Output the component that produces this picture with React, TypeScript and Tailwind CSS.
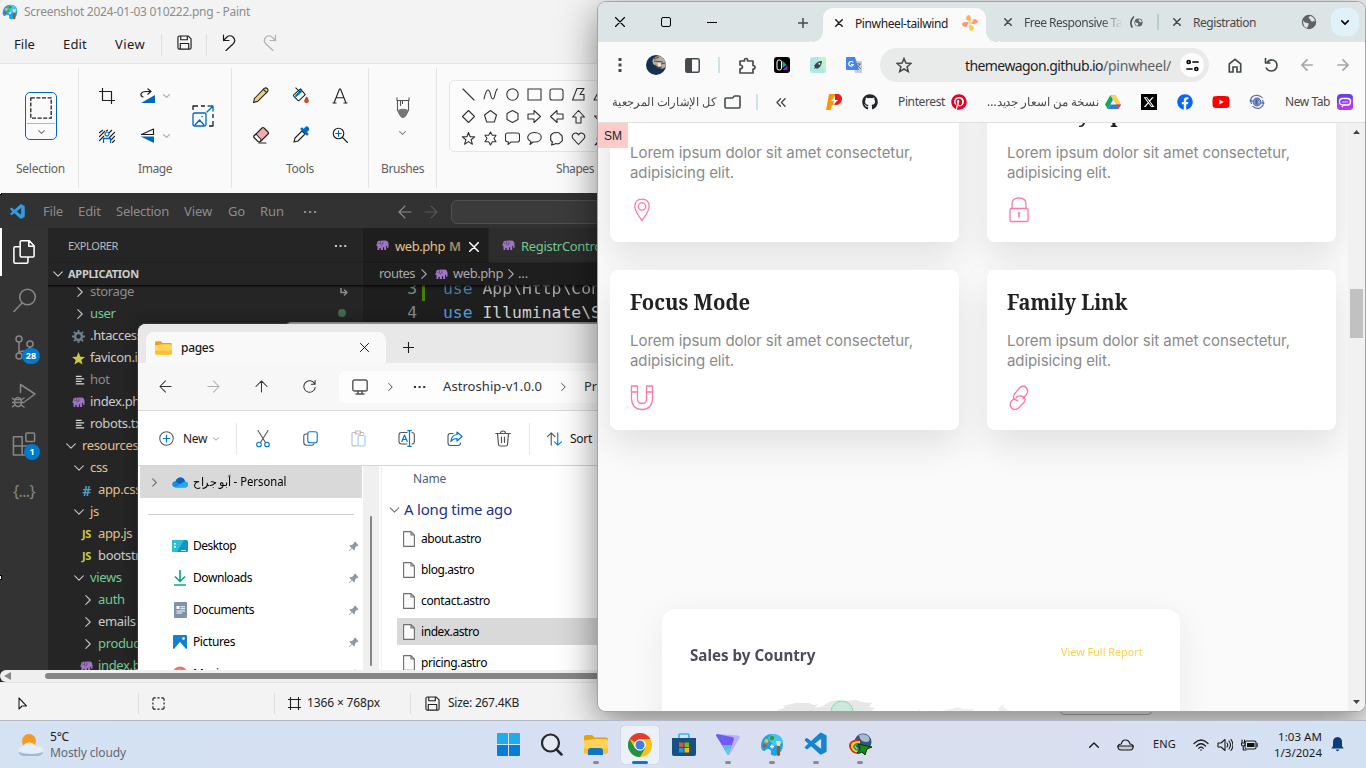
import React, { useLayoutEffect, useRef } from "react";
import { FaGithub, FaPinterest, FaFacebook, FaYoutube } from "react-icons/fa";
import { FaXTwitter } from "react-icons/fa6";
import { VscVscode } from "react-icons/vsc";
import { BsPinAngleFill } from "react-icons/bs";

/* Text that spreads its letters to fill the width given by its class. */
function T({ children, className = "" }: { children: string; className?: string }) {
  const outer = useRef<HTMLSpanElement>(null);
  const inner = useRef<HTMLSpanElement>(null);
  useLayoutEffect(() => {
    const o = outer.current;
    const i = inner.current;
    if (!o || !i) return;
    i.style.letterSpacing = "0px";
    const gap = o.getBoundingClientRect().width - i.getBoundingClientRect().width;
    i.style.letterSpacing = `${gap / children.length}px`;
  }, [children]);
  return (
    <span ref={outer} className={`block shrink-0 whitespace-pre ${className}`}>
      <span ref={inner} className="inline-block whitespace-pre">{children}</span>
    </span>
  );
}

/* Text squeezed horizontally to the width of its box; keeps joined scripts joined. */
function Squeeze({ children, className = "" }: { children: React.ReactNode; className?: string }) {
  const outer = useRef<HTMLSpanElement>(null);
  const inner = useRef<HTMLSpanElement>(null);
  useLayoutEffect(() => {
    const o = outer.current;
    const i = inner.current;
    if (!o || !i || !i.offsetWidth) return;
    i.style.transform = `scaleX(${o.offsetWidth / i.offsetWidth})`;
  }, []);
  return (
    <span dir="ltr" className={`block shrink-0 whitespace-pre ${className}`}>
      <span ref={inner} className="inline-block origin-left whitespace-pre">{children}</span>
      <span ref={outer} className="block h-0 w-full" />
    </span>
  );
}

type IconProps = { vb: string; className?: string; children: React.ReactNode };
function Icon({ vb, className = "", children }: IconProps) {
  return (
    <svg viewBox={vb} className={`block shrink-0 ${className}`} fill="none" stroke="currentColor" strokeWidth="1.1" strokeLinejoin="round" strokeLinecap="round">
      {children}
    </svg>
  );
}

const Close = ({ className = "" }) => (
  <Icon vb="0 0 10 10" className={className}><path d="M.5 .5l9 9M9.5 .5l-9 9" /></Icon>
);
const Down = ({ className = "" }) => (
  <Icon vb="0 0 10 6" className={className}><path d="M.7 .8L5 5.1 9.3 .8" /></Icon>
);
const Right = ({ className = "" }) => (
  <Icon vb="0 0 6 10" className={className}><path d="M.8 .6L5.2 5 .8 9.4" /></Icon>
);
const ArrowLeft = ({ className = "" }) => (
  <Icon vb="0 0 14 14" className={className}><path d="M13 7H1M7 1L1 7l6 6" /></Icon>
);
const ArrowRight = ({ className = "" }) => (
  <Icon vb="0 0 14 14" className={className}><path d="M1 7h12M7 1l6 6-6 6" /></Icon>
);
const Dots = ({ className = "" }) => (
  <Icon vb="0 0 14 4" className={className}><path stroke="none" fill="currentColor" d="M1 1h2.2v2H1zM6 1h2.2v2H6zM11 1h2.2v2H11z" /></Icon>
);
const Floppy = ({ className = "" }) => (
  <Icon vb="0 0 16 16" className={className}>
    <path strokeWidth="1.2" d="M1 2.5Q1 1 2.5 1h9.3L15 4.2v9.3q0 1.500-1.500 1.500h-11Q1 15 1 13.500zM4 1v4h7V1M3.500 15V9h9v6" />
  </Icon>
);
const Elephant = ({ className = "" }) => (
  <svg viewBox="0 0 14 11" className={`block shrink-0 ${className}`} fill="#a074c4">
    <path d="M1 5Q.5 1 4 .8L10 .5Q13.600.8 13.600 4.500V8.500H12V6L11 7v4H8.800V8H7.500v3H5V8.500L3.500 9v2H1.500V7Q.2 7 0 5z" />
    <path d="M4.800 1.500Q3.500 5 6 5.500 8 5 7.500 2" stroke="#252526" strokeWidth=".6" fill="none" />
    <circle cx="3" cy="3.500" r=".5" fill="#252526" />
  </svg>
);
const Palette = ({ className = "" }) => (
  <svg viewBox="0 0 24 24" className={`block shrink-0 ${className}`}>
    <path d="M12 1C5 1 1 7 1 13q0 5 3.500 5 3-3 5.500-1.500 2 2 .500 4.500 2 2.500 6 1.500 6-3 6.500-11Q23 1 12 1z" fill="#1ea4e4" />
    <path d="M12 1Q22 1 23 10L14 13 8 5z" fill="#45c8f0" />
    <circle cx="12" cy="5" r="2.200" fill="#3a9a2e" /><circle cx="6.500" cy="8" r="2.100" fill="#f5c21c" />
    <circle cx="4.500" cy="13" r="1.900" fill="#d8432b" /><path d="M12 11.500v4M10 13.500h4" stroke="#fff" strokeWidth="1.300" />
    <path d="M16 8h5l-1 5h-3z" fill="#f2d8b0" /><path d="M17 13h3v9q-1.500 2-3 0z" fill="#a4551c" />
  </svg>
);
const Folder = ({ className = "" }) => (
  <svg viewBox="0 0 24 20" className={`block shrink-0 ${className}`}>
    <path d="M0 2Q0 .5 2 .5h6L10.500 3H22q2 0 2 2v3H0z" fill="#e8a30c" />
    <path d="M0 6L10 4.500h12q2 0 2 1.500v11.500q0 2-2 2H2q-2 0-2-2z" fill="#ffd35a" />
    <path d="M0 14h24v3.500q0 2-2 2H2q-2 0-2-2z" fill="#f9c033" />
  </svg>
);
const Globe = ({ className = "" }) => (
  <svg viewBox="0 0 16 16" className={`block shrink-0 ${className}`} fill="none">
    <circle cx="8" cy="8" r="7.200" fill="#5f6366" />
    <path d="M2 6.500q2.500 3 4.500 2.500 1.500-.5 1 2l-1.500 3Q2 13 2 6.500zM9.500 2q-2.500 1-1.500 2.500 2 .5 1.500 2 1.500 2 3 .5l1.500.5Q13.500 3 9.500 2z" fill="#dde4e6" />
  </svg>
);

/* ---------- Paint ---------- */

function PaintHeader() {
  return (
    <header className="h-[64px] border-b border-[#e5e5e5] bg-[#f3f3f3] text-[#1b1b1b]">
      <div className="flex h-[24px] items-center pl-[2px]">
        <Palette className="size-[16px]" />
        <T className="ml-[6px] w-[226px] text-[12px] text-[#8d8d8d]">Screenshot 2024-01-03 010222.png - Paint</T>
      </div>
      <div className="flex h-[40px] items-center pl-[14px] pt-px text-[13px]">
        <T className="w-[21px]">File</T>
        <T className="ml-[28px] w-[24px]">Edit</T>
        <T className="ml-[28px] w-[30px]">View</T>
        <div className="ml-[16px] h-[23px] w-px bg-[#e0e0e0]" />
        <Floppy className="ml-[15px] size-[15px] -translate-y-[2px]" />
        <div className="ml-[14px] h-[23px] w-px bg-[#e0e0e0]" />
        <Icon vb="0 0 16 17" className="ml-[15px] h-[17px] w-[16px] -translate-y-[2px]">
          <path strokeWidth="1.2" d="M1.500 1v5.500H7M1.500 6.500L5 3q3-2.500 6 0 3.500 3.500 0 7L4 16.500" />
        </Icon>
        <Icon vb="0 0 16 17" className="ml-[23px] h-[17px] w-[16px] -translate-y-[2px] text-[#b0b0b0]">
          <path strokeWidth="1.2" d="M14.500 1v5.500H9M14.500 6.500L11 3Q8 .5 5 3q-3.500 3.500 0 7l7 6.500" />
        </Icon>
      </div>
    </header>
  );
}

function Group({ width, label, labelWidth, children }: { width: string; label: string; labelWidth: string; children: React.ReactNode }) {
  return (
    <div className={`flex h-[120px] shrink-0 flex-col border-r border-[#e5e5e5] ${width}`}>
      <div className="h-[92px]">{children}</div>
      <div className="flex justify-center text-[12px] leading-[18px] text-[#5f5f5f]">
        <T className={labelWidth}>{label}</T>
      </div>
    </div>
  );
}

const shapes: React.ReactNode[] = [
  <path d="M2 2l11 11" />,
  <path d="M1 12Q3 3 5 3c3 0 2 9 5 9 2 0 2-9 4.500-10" />,
  <circle cx="7.500" cy="7.500" r="5.700" />,
  <path strokeLinejoin="miter" d="M1 2h13v11H1z" />,
  <rect x="1" y="2" width="13" height="11" rx="2" />,
  <path d="M1.500 13L6 1.500h7l-4 6h4V13z" />,
  <path d="M7 2L1 13h13z" />,
  <path d="M7.500 1.500l6 6-6 6-6-6z" />,
  <path d="M7.500 1.500l6 4.500-2.200 7H3.700L1.500 6z" />,
  <path d="M7.500 1.500L13 4.500v6l-5.500 3L2 10.500v-6z" />,
  <path d="M1 5h6V1.500l6.500 6-6.500 6V10H1z" />,
  <path d="M14 5H8V1.500l-6.500 6 6.500 6V10h6z" />,
  <path d="M5 14V8H1.500l6-6.500 6 6.500H10v6z" />,
  <path d="M5 1v6H1.500l6 6.500 6-6.500H10V1z" />,
  <path d="M7.500 1.500l1.600 4.300 4.600.1-3.600 2.800 1.300 4.500-3.900-2.600-3.900 2.600 1.300-4.500L1.300 5.900l4.600-.1z" />,
  <path d="M7.500 1l1.800 3.300h3.700L11 7.500l2 3.200H9.300L7.500 14l-1.800-3.300H2l2-3.200-2-3.200h3.700z" />,
  <path d="M3 2h9.500q2 0 2 2v5q0 2-2 2H6l-3 2.500.5-2.500Q.5 11 .5 9V4q0-2 2-2z" />,
  <path d="M7.500 1.500c9 0 9 9.500 0 9.500H6l-3 2.500L4 10.500C-2 8 1 1.500 7.500 1.500z" />,
  <path d="M3 3q2-2 4-1.200 3-1 4.200 1.400 2.500 1 2 4 1 2.800-1.600 4Q10 13.600 7 12.600l-1.400.5L2.500 14l1-3Q.8 9.500 1.800 7 1 4.500 3 3z" />,
  <path d="M7.500 13.500L1.800 7.300C-.5 3 5.500-.2 7.500 4c2-4.200 8-1 5.700 3.300z" />,
  <path d="M8 1L4 8h3l-5 6 8-4-2-1 6-4-4-1z" />,
];

function Ribbon() {
  return (
    <div className="flex h-[129px] items-start bg-[#fafafa] pt-[4px] text-[#1f1f1f]">
      <Group width="w-[79px]" label=" Selection" labelWidth="w-[52px]">
        <div className="ml-[25px] mt-[24px] flex h-[48px] w-[32px] flex-col items-center rounded-[5px] border border-[#0067c0] pt-[4px]">
          <Icon vb="0 0 22 22" className="size-[22px]"><rect x=".8" y=".8" width="20.400" height="20.400" strokeDasharray="4 1.600" strokeWidth="1.300" strokeLinecap="butt" /></Icon>
          <div className="mt-[4px] h-px w-[28px] bg-[#b5b5b5]" />
          <Down className="mt-[6px] h-[4px] w-[7px] text-[#777] [stroke-width:1.600]" />
        </div>
      </Group>
      <Group width="w-[153px]" label="Image" labelWidth="w-[34px]">
        <div className="flex pl-[20px] pt-[20px]">
          <div className="grid grid-cols-[41px_23px_10px] items-center gap-y-[24px]">
            <Icon vb="0 0 16 16" className="size-[16px]"><path strokeWidth="1.200" strokeLinecap="butt" d="M3.500 0v12.500H16M0 3.500h12.500V16" /></Icon>
            <Icon vb="0 0 16 16" className="size-[16px]"><path strokeWidth="1.200" d="M3 9Q.5 8 1 6q.8-2.500 5-2.500h4M8 1l3 2.500L8 6" /><path d="M15 7v8H1z" fill="#0067c0" stroke="none" /></Icon>
            <Down className="h-[4px] w-[7px] text-[#a8a8a8] [stroke-width:1.600]" />
            <Icon vb="0 0 16 14" className="h-[14px] w-[16px]">
              <path strokeWidth="1.100" strokeLinecap="butt" d="M0 4l4-3M0 8l6-6M0 12l5-5M9 1l-2 1M13 1l-3 3M16 3l-6 6M16 7l-4 4M16 11l-3 3" />
              <circle cx="8" cy="5" r="2" stroke="#0067c0" fill="#fafafa" /><path stroke="#0067c0" fill="#fafafa" strokeWidth="1.300" d="M4.500 14V9.500h7V14" />
            </Icon>
            <Icon vb="0 0 16 16" className="size-[16px]"><path strokeWidth="1.200" d="M13.500 1v5.500H1.500z" /><path d="M14 15V8.500H.5z" fill="#0067c0" stroke="none" /></Icon>
            <Down className="h-[4px] w-[7px] text-[#a8a8a8] [stroke-width:1.600]" />
          </div>
          <Icon vb="0 0 22 22" className="ml-[19px] mt-[17px] size-[22px]">
            <path strokeWidth="1.300" strokeLinecap="butt" d="M1 5V1h5M9 1h4M21 9v4M21 16v5h-4" />
            <g stroke="#0067c0" strokeWidth="1.300"><path d="M15 7l6-6M16 1h5v5" /><rect x="1" y="8" width="13" height="13" rx="1.500" fill="#fafafa" /><path d="M3 20l4.500-5 4.500 5" /><path d="M10 11.500h.2" /></g>
          </Icon>
        </div>
      </Group>
      <Group width="w-[137px]" label="Tools" labelWidth="w-[28px]">
        <div className="grid w-max grid-cols-[40px_40px_16px] gap-y-[22px] pl-[20px] pt-[19px]">
          <Icon vb="0 0 18 18" className="-mr-[2px] size-[17px]"><path d="M1.500 16.500l1.300-4.600L13 1.500q1.800-1.200 3.200.2 1.500 1.600.2 3.200L6.300 15z" fill="#f2cf7c" /><path d="M12 2.500l3.500 3.500" /></Icon>
          <Icon vb="0 0 18 18" className="size-[17px]"><path fill="#fff" d="M2 8l7-6 5 6-6 6q-1 1-2 0l-4-4q-1-1 0-2z" /><path d="M3 9l6-6 2 2-7 6z" fill="#0078d4" stroke="none" /><path d="M4 1l4 4" /><path d="M15.500 11q-4 5 0 5.500 3.500-.5 0-5.500" fill="#e8561d" stroke="#b03c10" /></Icon>
          <Icon vb="0 0 16 16" className="size-[16px] translate-y-px"><path strokeLinecap="butt" d="M2 15L7.500 1h1L14 15M4.500 9.800h7M.5 15h4M11.500 15h4" strokeWidth="1.100" /></Icon>
          <Icon vb="0 0 18 18" className="size-[18px]"><path d="M2 10l8-8q1-1 2 0l4 4q1 1 0 2l-7 7q-1 1-2 0l-5-4z" fill="#f7a9ad" /><path d="M2 10l2-2 5.500 6-1.500 1.500q-1 .8-2 0l-4-4q-.6-.8 0-1.500z" fill="#fff" /><path d="M7 17h7" /></Icon>
          <Icon vb="0 0 18 18" className="size-[18px]"><path d="M2 16l1-4 7-7 3 3-7 7z" /><path d="M9 3l6 6 1-1-2-2q4-2 2-4.500Q13.500-.5 12 4l-2-2z" fill="#0067c0" stroke="#0067c0" /></Icon>
          <Icon vb="0 0 16 16" className="size-[16px] translate-y-px"><circle cx="6.500" cy="6.500" r="5.300" /><path d="M10.500 10.500l5 5" /><path stroke="#0067c0" strokeWidth="1.200" d="M6.500 3.800v5.400M3.800 6.500h5.400" /></Icon>
        </div>
      </Group>
      <Group width="w-[68px]" label="Brushes" labelWidth="w-[43px]">
        <div className="flex flex-col items-center pt-[29px]">
          <Icon vb="0 0 14 22" className="h-[22px] w-[14px] text-[#555]"><path strokeLinecap="butt" d="M1 .5v3h12v-3M1.500 3.500V13Q3 16 4 18q3 5 6 0 1-2 2.500-5V3.500M4.500 3.500V9M6.500 3.500V7" /><path d="M2 13q5-2.500 10 0l-2 5q-3 6-6 0z" fill="#777" stroke="none" /></Icon>
          <Down className="mt-[12px] h-[4px] w-[7px] text-[#888] [stroke-width:1.600]" />
        </div>
      </Group>
      <Group width="w-[277px]" label="Shapes" labelWidth="w-[38px]">
        <div className="ml-[12px] mt-[12px] grid h-[72px] w-[160px] grid-cols-[repeat(7,22px)] grid-rows-[repeat(3,22px)] place-items-center overflow-hidden rounded-[5px] border border-[#e6e6e6] bg-[#fcfcfc] px-[7px] py-[2px] text-[#333]">
          {shapes.map((s, i) => <Icon key={i} vb="0 0 15 15" className="size-[15px]">{s}</Icon>)}
        </div>
      </Group>
    </div>
  );
}

function PaintStatus() {
  return (
    <footer className="flex h-[38px] items-center border-t border-[#e3e3e3] bg-[#f3f3f3] pt-[3px] text-[12px] text-[#222]">
      <Icon vb="0 0 9 13" className="ml-[18px] h-[13px] w-[9px]"><path d="M1 1v11l3-3h4.500z" /></Icon>
      <div className="ml-[111px] h-[21px] w-px bg-[#dedede]" />
      <Icon vb="0 0 14 14" className="ml-[13px] size-[13px]"><path strokeWidth="1.300" strokeLinecap="butt" d="M1 4V2.500Q1 1 2.500 1H4M5.800 1h2.400M10 1h1.500Q13 1 13 2.500V4M13 5.800v2.400M13 10v1.500q0 1.500-1.500 1.500H10M8.200 13H5.800M4 13H2.500Q1 13 1 11.500V10M1 8.200V5.800" /></Icon>
      <div className="ml-[109px] h-[21px] w-px bg-[#dedede]" />
      <Icon vb="0 0 13 13" className="ml-[13px] size-[13px]"><path strokeLinecap="butt" d="M2.500 0v13M10.500 0v13M0 2.500h13M0 10.500h13" /></Icon>
      <T className="ml-[6px] w-[73px]">1366 × 768px</T>
      <div className="ml-[30px] h-[21px] w-px bg-[#dedede]" />
      <Floppy className="ml-[14px] size-[15px]" />
      <T className="ml-[8px] w-[71px]">Size: 267.4KB</T>
      <div className="ml-[541px] h-[23px] w-[92px] rounded-[4px] border border-[#aaa]" />
      <div className="ml-[58px] size-[14px] rounded-full border border-[#888]" />
    </footer>
  );
}

/* ---------- VS Code ---------- */

function ActivityBar() {
  return (
    <div className="flex w-[48px] shrink-0 flex-col items-stretch bg-[#333333] text-[#868686]">
      <div className="flex h-[48px] items-center border-l-2 border-white pl-[10px] text-white">
        <Icon vb="0 0 24 26" className="h-[25px] w-[24px]"><path strokeWidth="1.600" d="M8 2q0-1.200 1.200-1.200h8.300L22.500 6v10.500q0 1.200-1.200 1.200H9.200Q8 17.700 8 16.500zM17 1v5.500h5.500M8 7H2.800Q1.500 7 1.500 8.300v14.500q0 1.300 1.300 1.300h12q1.300 0 1.300-1.300v-5" /></Icon>
      </div>
      <div className="flex h-[48px] items-center justify-center"><Icon vb="0 0 24 24" className="ml-[1px] size-[24px]"><circle cx="14.500" cy="9" r="7.800" strokeWidth="1.600" /><path strokeWidth="1.600" d="M9 15l-8 8.500" /></Icon></div>
      <div className="relative flex h-[48px] items-center justify-center">
        <Icon vb="0 0 24 26" className="h-[26px] w-[24px]"><g strokeWidth="1.500"><circle cx="7" cy="4" r="3" /><circle cx="7" cy="21" r="3" /><circle cx="18" cy="9" r="3" /><path d="M7 7v11M18 12q-1 4-6 4-4 0-5 2" /></g></Icon>
        <span className="absolute left-[22px] top-[24px] flex h-[16px] w-[18px] items-center justify-center rounded-full bg-[#007acc] text-[9px] font-bold text-white">28</span>
      </div>
      <div className="flex h-[48px] items-center justify-center"><Icon vb="0 0 24 26" className="h-[26px] w-[24px]"><g strokeWidth="1.500"><path d="M8.500 9V1.500L23 11 13 18.500M8.500 1.500v8" /><ellipse cx="6" cy="19" rx="3.500" ry="4.500" /><path d="M3 16.500h6M0 15l3 2M0 19.500h12M0 24l3-2M12 15l-3 2M12 24l-3-2" /></g></Icon></div>
      <div className="relative flex h-[48px] items-center justify-center">
        <Icon vb="0 0 24 25" className="size-[24px]"><g strokeWidth="1.600"><path d="M1 5h9v9.500h9V24H1zM1 14.500h9V24" /><rect x="14" y="1" width="9" height="9" rx="1" /></g></Icon>
        <span className="absolute left-[24px] top-[24px] flex size-[16px] items-center justify-center rounded-full bg-[#007acc] text-[9px] font-bold text-white">1</span>
      </div>
      <div className="flex h-[46px] items-center justify-center text-[16px]"><T className="w-[22px]">{"{...}"}</T></div>
    </div>
  );
}

const treeIcons: Record<string, React.ReactNode> = {
  gear: <Icon vb="0 0 14 14" className="size-[13px] text-[#6d8086]"><circle cx="7" cy="7" r="3.700" strokeWidth="2.600" /><path strokeWidth="2" strokeLinecap="butt" d="M7 0v3M7 11v3M0 7h3M11 7h3M2 2l2 2M10 10l2 2M12 2l-2 2M4 10l-2 2" /></Icon>,
  star: <svg viewBox="0 0 14 14" className="size-[13px]"><path fill="#cbcb41" d="M7 0l2 5 5 .3-4 3.200 1.400 5L7 10.700 2.600 13.500 4 8.500 0 5.300 5 5z" /></svg>,
  lines: <Icon vb="0 0 12 12" className="ml-[3px] size-[10px] text-[#d4d7d6]"><path strokeLinecap="butt" strokeWidth="1.500" d="M1 1.500h7M1 4.500h10M1 7.500h7M1 10.500h10" /></Icon>,
  php: <Elephant className="h-[10px] w-[13px]" />,
  hash: <span className="text-[14px] font-bold text-[#519aba]">#</span>,
  js: <span className="text-[11px] font-bold text-[#cbcb41]">JS</span>,
  open: <Down className="h-[6px] w-[10px] text-[#c5c5c5]" />,
  shut: <Right className="ml-[2px] h-[10px] w-[6px] text-[#c5c5c5]" />,
};

function TreeRow({ icon, text, indent, tone }: { icon: string; text: string; indent: string; tone: string }) {
  return (
    <div className={`flex h-[22px] shrink-0 items-center whitespace-nowrap text-[13px] tracking-[-0.35px] ${indent} ${tone}`}>
      <span className="mr-[4px] flex w-[15px] justify-center">{treeIcons[icon]}</span>
      {text}
    </div>
  );
}

function Sidebar() {
  return (
    <div className="flex w-[315px] shrink-0 flex-col overflow-hidden bg-[#252526] text-[#bbbbbb]">
      <div className="flex h-[35px] items-center pl-[20px] pt-px text-[11px]">
        <T className="w-[50px]">EXPLORER</T>
        <Dots className="ml-[216px] h-[4px] w-[13px] text-[#c5c5c5]" />
      </div>
      <div className="z-10 flex h-[22px] shrink-0 items-center bg-[#252526] pl-[5px] text-[11px] font-bold text-[#cccccc] shadow-[0_1px_2px_#000]">
        <Down className="h-[6px] w-[10px]" />
        <T className="ml-[5px] w-[71px]">APPLICATION</T>
      </div>
      <div className="flex min-h-0 flex-1">
        <div className="-mt-[4px] flex flex-1 flex-col">
          <TreeRow icon="shut" text="storage" indent="pl-[23px]" tone="text-[#8c8c8c]" />
          <TreeRow icon="shut" text="user" indent="pl-[23px]" tone="text-[#73c991]" />
          <TreeRow icon="gear" text=".htaccess" indent="pl-[23px]" tone="text-[#cccccc]" />
          <TreeRow icon="star" text="favicon.ico" indent="pl-[23px]" tone="text-[#cccccc]" />
          <TreeRow icon="lines" text="hot" indent="pl-[23px]" tone="text-[#8c8c8c]" />
          <TreeRow icon="php" text="index.php" indent="pl-[23px]" tone="text-[#cccccc]" />
          <TreeRow icon="lines" text="robots.txt" indent="pl-[23px]" tone="text-[#cccccc]" />
          <TreeRow icon="open" text="resources" indent="pl-[15px]" tone="text-[#e2c08d]" />
          <TreeRow icon="open" text="css" indent="pl-[23px]" tone="text-[#e2c08d]" />
          <TreeRow icon="hash" text="app.css" indent="pl-[31px]" tone="text-[#e2c08d]" />
          <TreeRow icon="open" text="js" indent="pl-[23px]" tone="text-[#e2c08d]" />
          <TreeRow icon="js" text="app.js" indent="pl-[31px]" tone="text-[#e2c08d]" />
          <TreeRow icon="js" text="bootstrap.js" indent="pl-[31px]" tone="text-[#cccccc]" />
          <TreeRow icon="open" text="views" indent="pl-[23px]" tone="text-[#73c991]" />
          <TreeRow icon="shut" text="auth" indent="pl-[31px]" tone="text-[#73c991]" />
          <TreeRow icon="shut" text="emails" indent="pl-[31px]" tone="text-[#cccccc]" />
          <TreeRow icon="shut" text="products" indent="pl-[31px]" tone="text-[#73c991]" />
          <TreeRow icon="php" text="index.blade.php" indent="pl-[31px]" tone="text-[#73c991]" />
        </div>
        <div className="flex w-[42px] flex-col items-center">
          <Icon vb="0 0 8 8" className="ml-[3px] mt-[3px] size-[8px] text-[#8c8c8c]"><path strokeWidth="1.500" d="M1 0v4.500h6M4.500 2L7 4.500 4.500 7" /></Icon>
          <div className="mt-[13px] size-[8px] rounded-full bg-[#42684f]" />
        </div>
      </div>
    </div>
  );
}

function Editor() {
  return (
    <div className="flex min-w-0 flex-1 flex-col overflow-hidden bg-[#1e1e1e]">
      <div className="flex h-[35px] shrink-0 bg-[#252526] text-[13px]">
        <div className="flex w-[126px] shrink-0 items-center border-r border-[#252526] bg-[#1e1e1e] pl-[13px] pt-[2px] text-[#e2c08d]">
          <Elephant className="mb-[4px] h-[10px] w-[13px]" />
          <T className="ml-[6px] w-[50px]">web.php</T>
          <T className="ml-[4px] w-[11px] font-semibold text-[#a08b68]">M</T>
          <Close className="ml-[9px] size-[10px] text-white [stroke-width:1.500]" />
        </div>
        <div className="flex w-[200px] shrink-0 items-center bg-[#2d2d2d] pl-[13px] pt-[2px] text-[#73c991]">
          <Elephant className="mb-[4px] h-[10px] w-[13px]" />
          <T className="ml-[6px] w-[99px]">RegistrController</T>
        </div>
      </div>
      <div className="z-10 flex h-[22px] shrink-0 items-center bg-[#1e1e1e] pl-[16px] text-[13px] text-[#a9a9a9] shadow-[0_1px_3px_#000]">
        <T className="w-[36px]">routes</T>
        <Right className="ml-[6px] h-[10px] w-[6px]" />
        <Elephant className="ml-[8px] h-[10px] w-[13px]" />
        <T className="ml-[5px] w-[50px]">web.php</T>
        <Right className="ml-[5px] h-[10px] w-[6px]" />
        <T className="ml-[4px] w-[10px]">...</T>
      </div>
      <div className="-mt-[8px] font-['DejaVu_Sans_Mono',monospace] text-[16.400px] leading-[24px] text-[#d4d4d4]">
        <div className="flex h-[24px]">
          <span className="w-[54px] text-right text-[#858585]">3</span>
          <span className="ml-[5px] w-[3px] bg-[#487e02]" />
          <span className="ml-[18px] whitespace-pre opacity-75"><span className="text-[#569cd6]">use</span> App\Http\Controllers</span>
        </div>
        <div className="flex h-[24px]">
          <span className="w-[54px] text-right text-[#858585]">4</span>
          <span className="ml-[26px] whitespace-pre"><span className="text-[#569cd6]">use</span> Illuminate\Support</span>
        </div>
      </div>
    </div>
  );
}

function VsCode() {
  return (
    <div className="isolate flex h-[477px] flex-col overflow-hidden">
      <div className="flex h-[35px] shrink-0 items-center bg-[#323233] pl-[9px] pt-[2px] text-[13px] text-[#8c8c8c]">
        <VscVscode className="size-[18px] shrink-0 text-[#2f9be6]" />
        <T className="ml-[16px] w-[20px]">File</T>
        <T className="ml-[15px] w-[23px]">Edit</T>
        <T className="ml-[15px] w-[53px]">Selection</T>
        <T className="ml-[15px] w-[28px]">View</T>
        <T className="ml-[16px] w-[17px]">Go</T>
        <T className="ml-[15px] w-[24px]">Run</T>
        <Dots className="ml-[19px] h-[4px] w-[14px]" />
        <ArrowLeft className="ml-[81px] size-[14px]" />
        <ArrowRight className="ml-[12px] size-[14px] text-[#575757]" />
        <div className="ml-[13px] h-[24px] w-[460px] shrink-0 rounded-[6px] border border-[#505050] bg-[#3b3b3b]" />
      </div>
      <div className="flex min-h-0 flex-1"><ActivityBar /><Sidebar /><Editor /></div>
    </div>
  );
}

/* ---------- File Explorer ---------- */

const Pin = () => <BsPinAngleFill className="size-[11px] text-[#8c98a3]" />;

function Place({ icon, name, width }: { icon: React.ReactNode; name: string; width: string }) {
  return (
    <div className="flex h-[32px] shrink-0 items-center pl-[34px] pr-[4px]">
      <span className="flex w-[16px] justify-center">{icon}</span>
      <T className={`ml-[5px] ${width}`}>{name}</T>
      <span className="ml-auto"><Pin /></span>
    </div>
  );
}

function FileRow({ name, width, selected }: { name: string; width: string; selected?: boolean }) {
  return (
    <div className={`mb-[4px] ml-[15px] flex h-[27px] shrink-0 items-center pl-[6px] ${selected ? "bg-[#d9d9d9]" : ""}`}>
      <Icon vb="0 0 12 16" className="h-[16px] w-[12px] text-[#6f6f6f]"><path fill="#fbfbfb" d="M.6.6h7.400l3.400 3.400v11.400H.6zM8 .6V4h3.400" /></Icon>
      <T className={`ml-[6px] ${width}`}>{name}</T>
    </div>
  );
}

function Explorer() {
  return (
    <div className="absolute left-[138px] top-[131px] flex h-[346px] w-[600px] flex-col overflow-hidden rounded-tl-[8px] bg-white text-[12px] text-[#1a1a1a] shadow-[0_0_2px_#777,0_0_14px_rgba(0,0,0,.4)]">
      <div className="flex h-[39px] shrink-0 items-end bg-[#e8e8e8] pl-[8px]">
        <div className="flex h-[31px] w-[240px] items-center rounded-t-[8px] bg-[#f9f9f9] pl-[9px]">
          <Folder className="h-[14px] w-[17px]" />
          <T className="ml-[9px] w-[33px] font-medium">pages</T>
          <Close className="ml-[146px] size-[9px]" />
        </div>
        <Icon vb="0 0 11 11" className="mb-[10px] ml-[17px] size-[11px]"><path d="M5.500 0v11M0 5.500h11" /></Icon>
      </div>
      <div className="flex h-[48px] shrink-0 items-center border-b border-[#d9d9d9] bg-[#f7f7f7] pl-[21px] text-[#333]">
        <ArrowLeft className="size-[13px]" />
        <ArrowRight className="ml-[35px] size-[13px] text-[#b0b0b0]" />
        <ArrowLeft className="ml-[35px] size-[13px] rotate-90" />
        <Icon vb="0 0 14 14" className="ml-[35px] size-[13px]"><path d="M12.500 4A6.200 6.200 0 1 0 13.200 8M13 .5V4.500H9" /></Icon>
        <div className="ml-[23px] flex h-[32px] flex-1 items-center rounded-[5px] bg-[#fdfdfd] pl-[13px]">
          <Icon vb="0 0 16 16" className="size-[16px] text-[#555]"><rect x=".8" y="1" width="14.400" height="11" rx="1.800" strokeWidth="1.400" /><path strokeWidth="1.500" d="M4 15h8M6 12v2.500M10 12v2.500" /></Icon>
          <Right className="ml-[20px] h-[8px] w-[5px]" />
          <Dots className="ml-[20px] h-[4px] w-[13px]" />
          <T className="ml-[17px] w-[99px] text-[13px]">Astroship-v1.0.0</T>
          <Right className="ml-[19px] h-[8px] w-[5px]" />
          <T className="ml-[18px] w-[42px] text-[13px]">Project</T>
        </div>
      </div>
      <div className="flex h-[55px] shrink-0 items-center border-b border-[#d5d5d5] pl-[21px] pt-px text-[#555]">
        <Icon vb="0 0 16 16" className="size-[15px]"><circle cx="8" cy="8" r="7.200" /><path stroke="#0078d4" strokeWidth="1.300" d="M8 4.500v7M4.500 8h7" /></Icon>
        <T className="ml-[9px] w-[24px] text-[#1a1a1a]">New</T>
        <Down className="ml-[6px] h-[4px] w-[6px] text-[#999] [stroke-width:1.600]" />
        <div className="ml-[17px] h-[32px] w-px bg-[#e8e8e8]" />
        <Icon vb="0 0 14 18" className="ml-[19px] h-[18px] w-[14px]"><path d="M2 .5l7.500 12M12 .5l-7.500 12" /><g stroke="#0078d4"><circle cx="3" cy="14.500" r="2.300" /><circle cx="11" cy="14.500" r="2.300" /></g></Icon>
        <Icon vb="0 0 15 15" className="ml-[33px] size-[15px]"><path d="M4.500 3H3Q.8 3 .8 5v6.500q0 2.700 2.700 2.700H9q1.500 0 2-1.500" /><rect x="4.800" y=".8" width="9.400" height="11" rx="2" stroke="#0078d4" /></Icon>
        <Icon vb="0 0 15 17" className="ml-[33px] h-[17px] w-[15px] opacity-40"><path d="M5 2.500H2.200Q1 2.500 1 3.700v11q0 1.200 1.200 1.200H6M9 2.500h2.500q1.200 0 1.200 1.200M4.500 1h5v3h-5z" /><rect x="7" y="5.500" width="7" height="10.500" rx="1.200" stroke="#0078d4" /></Icon>
        <Icon vb="0 0 17 17" className="ml-[32px] size-[17px]"><path d="M9 2.500H3.500Q1 2.500 1 5v6.500Q1 14 3.500 14H9M14 2.500q2.300.3 2.300 2.500v6.500q0 2.300-2.300 2.500" /><path stroke="#0078d4" strokeWidth="1.200" d="M11.500 .7v15.600M9.800.7h3.400M9.800 16.300h3.400M3.800 11.500L6.500 5l2.700 6.500M4.500 9.500h4" /></Icon>
        <Icon vb="0 0 16 16" className="ml-[32px] size-[16px]"><path d="M6 2.500H3.500Q1 2.500 1 5v7q0 2.500 2.500 2.500H11q2.500 0 2.500-2.500" /><path stroke="#0078d4" strokeWidth="1.200" d="M10 1l5 4.500-5 4.500V7.500Q6 7.500 3.800 10.500 4.500 4 10 3.500z" /></Icon>
        <Icon vb="0 0 16 17" className="ml-[32px] h-[17px] w-[16px]"><path strokeWidth="1.200" d="M.8 3.500h14.400M5.500 3.500Q5.500 1 8 1t2.500 2.500M2.500 3.500l1 11q.2 1.500 1.500 1.500h6q1.300 0 1.500-1.500l1-11M6.500 7v5.500M9.500 7v5.500" /></Icon>
        <div className="ml-[18px] h-[32px] w-px bg-[#e8e8e8]" />
        <Icon vb="0 0 17 15" className="ml-[16px] h-[14px] w-[17px]"><path strokeWidth="1.200" d="M5 14V1M1 5l4-4 4 4" /><path stroke="#0078d4" strokeWidth="1.200" d="M12 1v13M8.500 10.500L12 14l4-3.500" /></Icon>
        <T className="ml-[7px] w-[22px] text-[#1a1a1a]">Sort</T>
      </div>
      <div className="flex min-h-0 flex-1 text-black">
        <div className="flex w-[225px] shrink-0 flex-col">
          <div className="ml-[2px] flex h-[32px] w-[222px] shrink-0 items-center bg-[#d9d9d9] pl-[12px]">
            <Right className="h-[9px] w-[5px] text-[#777] [stroke-width:1.500]" />
            <svg viewBox="0 0 16 11" className="ml-[15px] h-[11px] w-[16px]"><path d="M3 10.500Q-.5 9.500.3 6.500 1 4 3.800 4 5 .5 8.500.5t4.500 4q3 .5 3 3t-3 3z" fill="#1490df" /><path d="M3.800 4Q5 .5 8.500.5T13 4.500L8 7 4 5z" fill="#0864b8" /><path d="M3 10.500l8-5 2-1q3 .5 3 3t-3 3z" fill="#28a8ea" /></svg>
            <Squeeze className="ml-[5px] w-[93px]">{"\u2067أبو جراح\u2069 - Personal"}</Squeeze>
          </div>
          <div className="ml-[10px] mt-[16px] h-px w-[206px] shrink-0 bg-[#cfcfcf]" />
          <div className="h-[15px] shrink-0" />
          <Place name="Desktop" width="w-[43px]" icon={<svg viewBox="0 0 16 12" className="h-[12px] w-[16px]"><rect width="16" height="12" rx="1.500" fill="#1493c7" /><path d="M0 0h12L5 12H0z" fill="#2bc0d6" /><path d="M2 3h2v1.500H2zM2 6h2v1.500H2zM9 10h5v.8H9z" fill="#fff" /></svg>} />
          <Place name="Downloads" width="w-[59px]" icon={<Icon vb="0 0 14 16" className="h-[16px] w-[14px] text-[#12a583]"><path strokeWidth="1.700" strokeLinecap="butt" d="M7 0v11M2 6.500L7 11.500l5-5M1 15h12" /></Icon>} />
          <Place name="Documents" width="w-[61px]" icon={<svg viewBox="0 0 13 16" className="h-[16px] w-[13px]"><rect width="13" height="16" rx="1" fill="#7e93ab" /><path d="M2.500 4h3v3h-3zM6.500 4.200H11v1H6.500zM6.500 6.200H11v1H6.500zM2.500 8.500H11v1H2.500zM2.500 10.500H8v1H2.500z" fill="#fff" /></svg>} />
          <Place name="Pictures" width="w-[42px]" icon={<svg viewBox="0 0 14 14" className="size-[14px]"><rect width="14" height="14" rx="1" fill="#167fd0" /><path d="M1 14l6-7 6 7z" fill="#fff" /><circle cx="10.500" cy="3.500" r="1.300" fill="#fff" /></svg>} />
          <Place name="Music" width="w-[31px]" icon={<svg viewBox="0 0 16 16" className="size-[16px]"><circle cx="8" cy="8" r="7.500" fill="#e8785f" /><path d="M7 11V4l3 1" stroke="#fff" fill="none" /></svg>} />
        </div>
        <div className="flex w-[16px] shrink-0 justify-center bg-[#f0f0f0]"><div className="mt-[50px] h-[150px] w-[2px] rounded bg-[#868686]" /></div>
        <div className="ml-[2px] flex min-w-0 flex-1 flex-col border-l border-[#eee]">
          <div className="flex h-[26px] shrink-0 items-center pl-[31px] text-[#4c607a]"><T className="w-[33px]">Name</T></div>
          <div className="flex h-[33px] shrink-0 items-center pl-[7px] pt-[2px] text-[15px] text-[#1e3287]">
            <Down className="h-[6px] w-[11px] text-[#777]" />
            <T className="ml-[4px] w-[108px]">A long time ago</T>
          </div>
          <FileRow name="about.astro" width="w-[60px]" />
          <FileRow name="blog.astro" width="w-[53px]" />
          <FileRow name="contact.astro" width="w-[69px]" />
          <FileRow name="index.astro" width="w-[58px]" selected />
          <FileRow name="pricing.astro" width="w-[66px]" />
        </div>
      </div>
    </div>
  );
}

function Paint() {
  return (
    <div className="isolate flex h-[720px] flex-col">
      <PaintHeader />
      <Ribbon />
      <div className="relative h-[477px] shrink-0 overflow-hidden">
        <VsCode />
        <div className="absolute left-[285px] top-[129px] h-[30px] w-[500px] rounded-tl-[6px] border border-[#999] bg-[#bbb]" />
        <Explorer />
        <div className="absolute -left-[3px] -top-[3px] size-[5px] border border-black bg-white" />
        <div className="absolute -left-[3px] top-[382px] size-[5px] border border-black bg-white" />
      </div>
      <div className="flex h-[12px] shrink-0 bg-[#2b2b2b]">
        <div className="flex flex-1 items-center rounded-l-[6px] bg-[#f0efef]">
          <svg viewBox="0 0 7 8" className="ml-[4px] h-[8px] w-[7px] shrink-0"><path d="M7 0v8L0 4z" fill="#868686" /></svg>
          <div className="ml-[34px] h-[6px] w-[1200px] rounded-full bg-[#868686]" />
        </div>
      </div>
      <PaintStatus />
    </div>
  );
}

/* ---------- Chrome ---------- */

function TabStrip() {
  return (
    <div className="flex h-[40px] shrink-0 items-center bg-[#dde4e6] text-[12px] text-[#45494b]">
      <Close className="ml-[17px] size-[10px] text-black" />
      <div className="ml-[36px] size-[10px] shrink-0 rounded-[2px] border border-black" />
      <div className="ml-[36px] h-px w-[10px] shrink-0 bg-black" />
      <Icon vb="0 0 10 10" className="ml-[81px] mt-px size-[10px]"><path strokeWidth="1.500" d="M5 0v10M0 5h10" /></Icon>
      <div className="ml-px flex h-full w-[191px] shrink-0 items-end">
        <div className="h-[10px] w-[14px] bg-[radial-gradient(circle_at_4px_0,#dde4e6_9.500px,#fafafa_10px)]" />
        <div className="flex h-[34px] w-[163px] items-center rounded-t-[10px] bg-[#fafafa] pb-[4px] pl-[12px] text-[#222]">
          <Icon vb="0 0 10 10" className="size-[8px]"><path strokeWidth="1.900" d="M1 1l8 8M9 1l-8 8" /></Icon>
          <T className="ml-[12px] w-[93px] translate-y-px">Pinwheel-tailwind</T>
          <svg viewBox="0 0 16 16" className="ml-[14px] size-[16px] shrink-0"><path d="M9 8Q7 5 4 4.500 4 0 7.500 0 10 3 8 8" fill="#ffb054" /><path d="M8 9Q11 7 11.500 4 16 4 16 7.500 13 10 8 8" fill="#ff9a76" /><path d="M7 8Q9 11 12 11.500 12 16 8.500 16 6 13 8 8" fill="#ffcb4f" /><path d="M8 7Q5 9 4.500 12 0 12 0 8.500 3 6 8 8" fill="#fb9478" /></svg>
        </div>
        <div className="h-[10px] w-[14px] bg-[radial-gradient(circle_at_10px_0,#dde4e6_9.500px,#fafafa_10px)]" />
      </div>
      <Icon vb="0 0 10 10" className="ml-[4px] size-[8px]"><path strokeWidth="1.900" d="M1 1l8 8M9 1l-8 8" /></Icon>
      <div className="ml-[12px] w-[98px] translate-y-px overflow-hidden [mask-image:linear-gradient(to_right,#000_80%,transparent)]"><T className="w-[98px]">Free Responsive Ta</T></div>
      <div className="relative ml-[8px] shrink-0 pl-[4px]">
        <Globe className="size-[9px]" />
        <Icon vb="0 0 5 13" className="absolute -top-[2px] left-0 h-[13px] w-[5px]"><path strokeWidth="1.500" d="M3.500 1Q-1 6 2 11" /></Icon>
      </div>
      <div className="ml-[14px] h-[16px] w-[2px] shrink-0 bg-[#b9cdd1]" />
      <Icon vb="0 0 10 10" className="ml-[14px] size-[8px]"><path strokeWidth="1.900" d="M1 1l8 8M9 1l-8 8" /></Icon>
      <T className="ml-[12px] w-[63px] translate-y-px">Registration</T>
      <Globe className="ml-[45px] size-[16px]" />
      <div className="ml-[14px] flex size-[28px] shrink-0 items-center justify-center rounded-[10px] bg-[#e0f1f7] text-black"><Icon vb="0 0 10 6" className="h-[5px] w-[8px]"><path strokeWidth="2" d="M1 1l4 4 4-4" /></Icon></div>
    </div>
  );
}

function Toolbar() {
  return (
    <div className="flex h-[46px] shrink-0 items-center text-[#454b4d]">
      <svg viewBox="0 0 4 14" className="ml-[20px] h-[14px] w-[4px] shrink-0"><path fill="currentColor" d="M.5 0h3v3h-3zM.5 5.500h3v3h-3zM.5 11h3v3h-3z" /></svg>
      <svg viewBox="0 0 20 20" className="ml-[24px] size-[20px] shrink-0"><circle cx="10" cy="10" r="10" fill="#17304f" /><path d="M7 4q4-5 9-2 5 5 3.500 10-3 3-6 1l-5-3q-3-2-1.500-6z" fill="#b8aca3" /><path d="M8 6l9 1M8 4l5-2M15 9l4-1M9 10l3 3 4-1" stroke="#4b4d55" fill="none" strokeWidth="1.100" /><path d="M12 8h3v3h-3z" fill="#f3e3d5" /></svg>
      <svg viewBox="0 0 15 15" className="ml-[19px] size-[15px] shrink-0"><rect x=".8" y=".8" width="13.400" height="13.400" rx="1.500" fill="#fafafa" stroke="currentColor" strokeWidth="1.500" /><path fill="currentColor" d="M1 1h6v13H1z" /></svg>
      <div className="ml-[18px] h-[16px] w-[2px] bg-[#cee2e7]" />
      <Icon vb="0 0 18 17" className="ml-[18px] h-[17px] w-[18px]"><path strokeWidth="1.700" d="M2 4H6.500Q6 1.500 8 1.500T9.500 4H15V8.500q2 0 2 1.700T15 12V16H2v-4.200q2.500-.3 2.500-1.900T2 8z" /></Icon>
      <svg viewBox="0 0 16 16" className="ml-[18px] size-[16px] shrink-0"><rect width="16" height="16" rx="3" fill="#000" /><rect x="3" y="3" width="4.500" height="10" rx="2" fill="#000" stroke="#fff" /><path d="M8.500 3.500L12.500 8l-4 3z" fill="#19b574" /><path d="M8.500 13l5-5v5z" fill="#a517e8" /></svg>
      <svg viewBox="0 0 16 16" className="ml-[20px] size-[16px] shrink-0"><rect width="16" height="16" rx="3" fill="#aee9e4" /><path d="M8 0h5q3 0 3 3v13z" fill="#c2f3cf" /><path d="M4 9q3-5 8-5 0 5-5 8l-1-1-2 1 1-2z" fill="#3c454b" /><circle cx="9.300" cy="6.700" r="1" fill="#fff" /></svg>
      <svg viewBox="0 0 16 16" className="ml-[20px] size-[16px] shrink-0"><path d="M6 4h10v12H9z" fill="#c9ced5" /><path d="M1 0h8l4 13H1q-1 0-1-1V1q0-1 1-1z" fill="#4784f0" /><path d="M10 7h5M12.500 6v1M14 7q-1 3-4 4M11 8l4 4" stroke="#607d8b" fill="none" /><path d="M7 5.500A2.300 2.300 0 1 0 7.300 7.500H5" stroke="#fff" strokeWidth="1.200" fill="none" /></svg>
      <div className="ml-[18px] flex h-[34px] w-[329px] shrink-0 items-center rounded-full bg-[#e9ebeb] pl-[16px]">
        <Icon vb="0 0 16 16" className="size-[16px]"><path strokeWidth="1.500" strokeLinejoin="miter" d="M8 1.500l1.900 4.600 5 .4-3.800 3.200 1.200 4.900L8 12l-4.300 2.600 1.200-4.900L1.100 6.500l5-.4z" /></Icon>
        <div className="ml-[53px] flex text-[14px] text-[#1f1f1f]"><T className="w-[138px]">themewagon.github.io</T><T className="w-[68px] text-[#5b6062]">/pinwheel/</T></div>
        <div className="ml-[9px] flex size-[24px] items-center justify-center rounded-full bg-[#fdfdfd] text-black"><Icon vb="0 0 13 13" className="size-[13px]"><g strokeWidth="1.700"><circle cx="2.700" cy="3" r="1.500" /><path d="M7 3h5M1 10h5" /><circle cx="10.300" cy="10" r="1.500" /></g></Icon></div>
      </div>
      <Icon vb="0 0 14 15" className="ml-[19px] h-[15px] w-[14px]"><path strokeWidth="1.700" strokeLinejoin="miter" d="M1.300 5.800L7 1.300l5.700 4.500V14H9V9H5v5H1.300z" /></Icon>
      <Icon vb="0 0 14 14" className="ml-[22px] size-[14px]"><path strokeWidth="1.700" strokeLinecap="butt" d="M1.500 0v5h5M1.500 5H3Q5 1.500 8.500 2 13 3 13 7.500q-.5 5-5.500 5.500Q3.500 13 2 9.500" /></Icon>
      <ArrowLeft className="ml-[23px] size-[12px] text-[#a6a9aa] [stroke-width:2]" />
      <ArrowRight className="ml-[24px] size-[12px] text-[#a6a9aa] [stroke-width:2]" />
    </div>
  );
}

function Bookmarks() {
  return (
    <div className="flex h-[35px] shrink-0 items-center border-b border-[#dfe0e0] pb-[6px] text-[12px] text-[#454b4d]">
      <Squeeze className="ml-[14px] w-[104px]">كل الإشارات المرجعية</Squeeze>
      <Icon vb="0 0 17 14" className="ml-[8px] h-[14px] w-[17px]"><path strokeWidth="1.600" d="M1 4q0-1 1-1h6.500L10.500 1H15q1 0 1 1v10q0 1-1 1H2q-1 0-1-1z" /></Icon>
      <div className="ml-[15px] h-[16px] w-[2px] bg-[#cee2e7]" />
      <Icon vb="0 0 10 9" className="ml-[18px] h-[9px] w-[10px]"><path strokeWidth="1.400" d="M4.500 .8L1 4.500l3.500 3.700M9 .8L5.500 4.500 9 8.200" /></Icon>
      <svg viewBox="0 0 16 16" className="ml-[40px] size-[16px] shrink-0"><path d="M3 0h9q4 1 4 5-1 6-7 6H6l-1.500 5H0z" fill="#fa9512" /><path d="M9 0h3q4 1 4 5-1 6-7 6z" fill="#ed1c24" /><path d="M9 2L5 7h3L7 11l5-5H9z" fill="#fff" /></svg>
      <FaGithub className="ml-[20px] size-[16px] shrink-0 text-[#20262b]" />
      <T className="ml-[20px] w-[47px]">Pinterest</T>
      <FaPinterest className="ml-[6px] size-[16px] shrink-0 text-[#e60023]" />
      <Squeeze className="ml-[20px] w-[112px]">{"\u2067نسخة من اسعار جديد...\u2069"}</Squeeze>
      <svg viewBox="0 0 16 14" className="ml-[6px] h-[14px] w-[16px] shrink-0"><path d="M5.500 0L0 9.500 2.700 14 8 4.700z" fill="#0da960" /><path d="M5.500 0h5L16 9.500h-5z" fill="#ffcf48" /><path d="M5.300 9.500H16L13.300 14H2.700z" fill="#3777e3" /><path d="M11 9.500h5L13.300 14z" fill="#ea4335" /></svg>
      <div className="ml-[20px] flex size-[16px] shrink-0 items-center justify-center bg-black"><FaXTwitter className="size-[12px] text-white" /></div>
      <FaFacebook className="ml-[20px] size-[16px] shrink-0 text-[#0866ff]" />
      <FaYoutube className="ml-[19px] size-[18px] shrink-0 text-[#f00]" />
      <svg viewBox="0 0 16 16" className="ml-[19px] size-[16px] shrink-0" fill="none" stroke="#5871ad" strokeWidth="1.200"><path d="M2.500 10Q0 4 5 1.800q5-1.500 8.500 2M13.500 6q2.500 6-3 8.200-4 1-7-2" /><circle cx="8" cy="8" r="3.800" fill="#90a5d2" /><path d="M9.500 6H7v4h2.500M7 8h2M12 9h3.500M.5 7H4" stroke="#33549c" /></svg>
      <T className="ml-[20px] w-[45px]">New Tab</T>
      <svg viewBox="0 0 16 16" className="ml-[7px] size-[16px] shrink-0"><rect width="16" height="16" rx="4" fill="#6b40e8" /><path d="M0 9l16-5v8q0 4-4 4H4q-4 0-4-4z" fill="#b13cec" /><rect x="2.500" y="4.500" width="11" height="6.500" rx="3" fill="none" stroke="#fff" strokeWidth="1.300" /><path d="M5 13l2-2M5.500 7.800h5" stroke="#fff" strokeDasharray="1.200 .8" strokeWidth="1.300" /></svg>
    </div>
  );
}

function Feature({ title, titleWidth, children }: { title: string; titleWidth: string; children: React.ReactNode }) {
  return (
    <div className="h-[160px] rounded-[8px] bg-white px-[20px] pt-[20px] text-[15px] leading-[20px] text-[#8a8a8a] shadow-[0_15px_35px_rgba(0,0,0,.1)]">
      <div className="h-[41px] font-['Noto_Serif','DejaVu_Serif_Condensed','DejaVu_Serif',serif] text-[21px] font-bold leading-[25px] text-[#222]"><Squeeze className={titleWidth}>{title}</Squeeze></div>
      <div className="font-[Inter,sans-serif]">
        <T className="w-[283px]">Lorem ipsum dolor sit amet consectetur,</T>
        <T className="w-[104px]">adipisicing elit.</T>
      </div>
      <div className="mt-[14px] h-[26px] text-[#fb7ba2]">{children}</div>
    </div>
  );
}

function Page() {
  return (
    <div className="flex min-h-0 flex-1 bg-[#fafafa]">
      <div className="relative flex min-w-0 flex-1 flex-col overflow-hidden">
        <div className="absolute left-0 top-0 z-10 flex h-[25px] w-[30px] items-center justify-center bg-[#fecaca] pt-px font-['Liberation_Sans',sans-serif] text-[12px] text-[#1f1f1f]">SM</div>
        <div className="-mt-[41px] ml-[12px] grid w-[726px] shrink-0 grid-cols-2 gap-[28px]">
          <Feature title="" titleWidth="w-0">
            <Icon vb="0 0 24 26" className="h-[26px] w-[24px]"><path strokeWidth="1.300" d="M12 23.500Q4.800 14 4.800 9.200q.4-7 7.200-7t7.200 7Q19.200 14 12 23.500z" /><circle cx="12" cy="9.500" r="3.700" strokeWidth="1.300" /></Icon>
          </Feature>
          <Feature title="Security Options" titleWidth="w-[166px]">
            <Icon vb="0 0 24 26" className="h-[26px] w-[24px]"><path strokeWidth="1.300" d="M5 11.500V7q0-6 7-6t7 6v4.500" /><rect x="3" y="11.500" width="18" height="13" rx="1" strokeWidth="1.300" /><path strokeWidth="1.600" d="M12 16v4M11.300 16h1.400" /></Icon>
          </Feature>
          <Feature title="Focus Mode" titleWidth="w-[120px]">
            <Icon vb="0 0 24 26" className="h-[26px] w-[24px]"><path strokeWidth="1.300" d="M1.500 1h6v13q0 4.500 4.500 4.500t4.500-4.500V1h6v12.500Q22 24.500 12 24.500T1.500 13.500zM1.500 7h6M16.500 7h6" /></Icon>
          </Feature>
          <Feature title="Family Link" titleWidth="w-[120px]">
            <Icon vb="0 0 24 26" className="h-[26px] w-[24px]"><g strokeWidth="1.300"><path d="M10.500 15.500Q4.500 14 7.500 9l5-6q4-4 7 0 2.500 3.500-.5 7l-3 3.500" /><path d="M9 13q1.500-2.500 5-2 6 1.500 3 6.500l-5.500 5.500q-4 3-7 0-2.500-3.500 0-7L7 13.500" /></g></Icon>
          </Feature>
        </div>
        <div className="ml-[64px] mt-[179px] h-[180px] w-[518px] shrink-0 rounded-[14px] bg-white shadow-[0_8px_35px_rgba(0,0,0,.07)]">
          <div className="flex items-start pl-[28px] pt-[36px]">
            <Squeeze className="w-[125px] text-[16px] font-bold leading-[20px] text-[#4c4b59]">Sales by Country</Squeeze>
            <Squeeze className="ml-[246px] w-[82px] text-[11.500px] leading-[14px] text-[#fbd150]">View Full Report</Squeeze>
          </div>
          <svg viewBox="0 0 260 40" className="ml-[108px] mt-[30px] h-[40px] w-[260px]">
            <path d="M4 22l3-6 8-2-2-2 12-3 14 0 5 2 4-1-3 4 8-2 6-4 8-2 5 1 14-1 6 2 10 1-3 4 6 1-5 4-8 0-3 6-20 0-10-7-12 2-8 5H6z" transform="translate(0,-1)" fill="#e7e7e7" />
            <path d="M144 17l5-2 4 2 10-1 4 2 9-3 12-3 5 2 12 0-5 3-17 2-14 3zM228 14l5-5 1 4 6 3v4h-8z" fill="#eeeeee" />
            <circle cx="72" cy="17" r="11" fill="#cfe7db" stroke="#85dfae" />
          </svg>
        </div>
      </div>
      <div className="flex w-[17px] shrink-0 flex-col items-center bg-[#f1f1f1]">
        <svg viewBox="0 0 7 4" className="mt-[7px] h-[4px] w-[7px]"><path d="M3.500 0L7 4H0z" fill="#444" /></svg>
        <div className="mt-[155px] h-[49px] w-[13px] bg-[#c1c1c1]" />
        <svg viewBox="0 0 7 4" className="mb-[7px] mt-auto h-[4px] w-[7px]"><path d="M3.500 4L7 0H0z" fill="#444" /></svg>
      </div>
    </div>
  );
}

function Chrome() {
  return (
    <div className="absolute left-[598px] top-[2px] flex h-[709px] w-[767px] flex-col overflow-hidden rounded-[8px] bg-[#fafafa] shadow-[0_0_0_1px_#a3a3a3,0_10px_38px_rgba(0,0,0,.5)]">
      <TabStrip />
      <Toolbar />
      <Bookmarks />
      <Page />
    </div>
  );
}

/* ---------- Taskbar ---------- */

function Task({ mark, active, children }: { mark?: boolean; active?: boolean; children: React.ReactNode }) {
  return (
    <div className="flex w-[44px] shrink-0 justify-center">
      <div className={`flex h-[38px] w-[38px] flex-col items-center rounded-[4px] pt-[7px] ${active ? "bg-[#ecf0f8] shadow-[0_0_1px_#aab]" : ""}`}>
        <div className="flex h-[24px] items-center">{children}</div>
        {active && <div className="mt-[4px] h-[3px] w-[16px] rounded-full bg-[#0878d4]" />}
        {mark && <div className="mt-[4px] h-[3px] w-[6px] rounded-full bg-[#858a95]" />}
      </div>
    </div>
  );
}

function Taskbar() {
  return (
    <div className="relative z-20 flex h-[48px] items-center border-t border-[#b4b8c4] bg-[linear-gradient(90deg,#d4e2f2_0%,#d6e0f3_35%,#dadff0_60%,#dadff0_78%,#d3e2f3_100%)] text-[12px] text-[#1b1b1b]">
      <svg viewBox="0 0 26 24" className="ml-[18px] h-[24px] w-[26px] shrink-0"><circle cx="11" cy="8" r="7" fill="#f59a23" /><path d="M5 23Q0 22 .5 17.500 1 14 5 13.500 7 9 12 9.500q4 .5 5.500 4 7-1 8 4-.2 5-5.500 5.500z" fill="#e4edfa" /><path d="M5 23Q1 22.500.6 19q13 4 24.800 0-1 3.500-5.400 4z" fill="#9dbbe2" /></svg>
      <div className="ml-[6px] w-[76px] leading-[16px]"><T className="w-[19px]">5°C</T><T className="w-[76px] text-[#626873]">Mostly cloudy</T></div>
      <div className="ml-[360px] flex">
        <Task><svg viewBox="0 0 23 23" className="size-[23px]"><path d="M0 1q0-1 1-1h10v11H0zM12 0h10q1 0 1 1v10H12z" fill="#22abe9" /><path d="M0 12h11v11H1q-1 0-1-1zM12 12h11v10q0 1-1 1H12z" fill="#087bd4" /></svg></Task>
        <Task><Icon vb="0 0 22 23" className="h-[23px] w-[22px] text-[#252a30]"><circle cx="9.500" cy="10" r="8.500" strokeWidth="2.200" fill="#e6eaf2" /><path strokeWidth="2.500" d="M15.500 16.500l5 5" /></Icon></Task>
        <Task mark><div className="relative"><Folder className="h-[21px] w-[24px]" /><div className="absolute bottom-0 left-[4px] h-[7px] w-[15px] rounded-t-[3px] bg-[#1373c4]" /></div></Task>
        <Task active><svg viewBox="0 0 24 24" className="size-[24px]"><circle cx="12" cy="12" r="12" fill="#fbc116" /><path d="M12 12L1.600 6A12 12 0 0 1 22.400 6H12z" fill="#e33b2e" /><path d="M12 12l5.200 3L12 24A12 12 0 0 1 1.600 6l5.200 9z" fill="#229342" /><circle cx="12" cy="12" r="5.800" fill="#fff" /><circle cx="12" cy="12" r="4.500" fill="#3b7de9" /></svg></Task>
        <Task><svg viewBox="0 0 24 24" className="size-[24px]"><path d="M7 5V2q0-1 1-1h8q1 0 1 1v3" stroke="#36b9e6" strokeWidth="1.700" fill="none" /><path d="M0 5h24v16q0 2-2 2H2q-2 0-2-2z" fill="#185085" /><path d="M7 9.500h4.500V14H7z" fill="#f04e23" /><path d="M12.500 9.500H17V14h-4.500z" fill="#7fba00" /><path d="M7 15h4.500v4.500H7z" fill="#00a4ef" /><path d="M12.500 15H17v4.500h-4.500z" fill="#ffb900" /></svg></Task>
        <Task mark><svg viewBox="0 0 24 24" className="size-[24px]"><path d="M1 1l21 1.500q3 .3 1 3.500L14 21q-1.500 2-3 0z" fill="#b9b2f8" /><path d="M1 1l15 3q3 1 1.500 3.500L12 22 0 2.500Q0 1 1 1z" fill="#6f5cf6" /><path d="M6 12h9.500L12 22z" fill="#5db9ec" /><path d="M9 17l5-1-2 6z" fill="#43e0d0" /></svg></Task>
        <Task mark><Palette className="size-[24px]" /></Task>
        <Task mark><VscVscode className="size-[27px] shrink-0 text-[#1685cf]" /></Task>
        <Task mark><svg viewBox="0 0 24 24" className="size-[24px]"><circle cx="15" cy="9" r="8.500" fill="#35547e" /><path d="M11 2q7-2 10 2 2 5-3 5-6 0-7-7z" fill="#aabace" /><g fill="none" strokeWidth="2"><path d="M11 8Q2 7 2 13q1 6 8 7" stroke="#d32d1c" /><path d="M12 9Q4 9 4 13.500q1 5 7 5" stroke="#f5ce26" /><path d="M12 11q-6 0-6 3 1 3 5 3" stroke="#37a02d" /></g><path d="M10 11l14 3-5 2-2 6-3-3q-3 2-5 1 3-3 3-5z" fill="#18881c" stroke="#07350a" /></svg></Task>
      </div>
      <Icon vb="0 0 10 6" className="ml-[207px] h-[6px] w-[10px]"><path strokeWidth="1.400" d="M.7 5.200L5 .9l4.300 4.300" /></Icon>
      <Icon vb="0 0 17 12" className="ml-[18px] h-[12px] w-[17px]"><path strokeWidth="1.200" fill="#c6c9d3" d="M1 7h15q.5 4-3 4H4Q.8 11 1 7z" /><path strokeWidth="1.200" d="M1 7.500Q1.200 5 4.300 5 5 1 8.500 1T13 5q3 .2 3.200 2.500" /></Icon>
      <T className="ml-[19px] w-[23px] text-[11px]">ENG</T>
      <Icon vb="0 0 16 12" className="ml-[17px] h-[12px] w-[16px]"><path strokeWidth="1.200" d="M1 4.500q7-7 14 0M3.500 7q4.500-4.500 9 0M5.700 9.300q2.300-2.300 4.600 0" /><circle cx="8" cy="11" r=".8" fill="currentColor" stroke="none" /></Icon>
      <Icon vb="0 0 16 14" className="ml-[8px] h-[14px] w-[16px]"><path d="M1 5h3l4-3.500v11L4 9H1zM10 5q1.500 2 0 4M12 3q3 4 0 8M14 1.500q4 5.500 0 11" /></Icon>
      <Icon vb="0 0 17 12" className="ml-[8px] h-[12px] w-[17px]"><rect x="4" y="2" width="11" height="8" rx="1.500" /><path d="M6 4h7.500v4H6z" fill="#111" stroke="none" /><path d="M16.200 4.500v3M1 1v3M3.500 1v3M.5 4h3.500v2q-2 2-3.500 0zM2.200 7v4h3" fill="#dadff0" /></Icon>
      <div className="ml-[16px] flex w-[48px] flex-col items-end text-[11.500px] leading-[16px]"><T className="w-[44px]">1:03 AM</T><T className="w-[48px]">1/3/2024</T></div>
      <svg viewBox="0 0 13 15" className="ml-[9px] h-[15px] w-[13px]"><path d="M6.500 0Q11 .5 11 5v4l1.700 2.500H.3L2 9V5Q2 .5 6.500 0zM4.500 12.500h4q-2 3.500-4 0z" fill="#0b3c7c" /></svg>
    </div>
  );
}

export default function App() {
  return (
    <div className="relative h-[768px] w-[1366px] overflow-hidden bg-[#f3f3f3] font-['Noto_Sans','Open_Sans',sans-serif]">
      <Paint />
      <Chrome />
      <Taskbar />
    </div>
  );
}
